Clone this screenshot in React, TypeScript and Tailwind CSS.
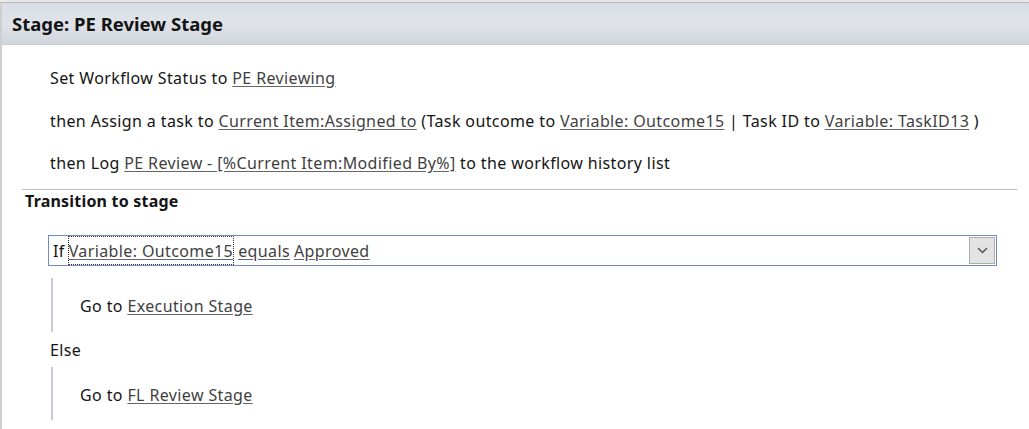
import React from "react";

const L = ({ children }: { children: React.ReactNode }) => (
  <span className="text-[#3f3f3f] underline decoration-[#666] underline-offset-2">{children}</span>
);

export default function App() {
  return (
    <div
      className="w-[1029px] h-[429px] bg-white overflow-hidden text-[16px] tracking-[0.38px] leading-[20px] text-[#141414]"
      style={{ fontFamily: '"Noto Sans", "Open Sans", sans-serif' }}
    >
      <div className="h-[2px] bg-[#e8e8e8]" />
      <div className="h-[427px] border-t border-[#b8b8b8] border-l-2 border-l-[#cfcfcf] flex flex-col">
        <div className="h-[42px] shrink-0 flex items-center pl-[10px] pt-[1px] bg-gradient-to-b from-[#d9dde5] via-[#e0e4ea] to-[#d1d5dc] border-b border-[#c9cdd3] font-bold text-[18.5px] tracking-normal">
          Stage: PE Review Stage
        </div>
        <div className="mt-[23px] pl-[48px] whitespace-nowrap">
          Set Workflow Status to <L>PE Reviewing</L>
        </div>
        <div className="mt-[23px] pl-[48px] whitespace-nowrap">
          then Assign a task to <L>Current Item:Assigned to</L> (Task outcome to <L>Variable: Outcome15</L> | Task ID to{" "}
          <L>Variable: TaskID13</L> )
        </div>
        <div className="mt-[22px] pl-[48px] whitespace-nowrap">
          then Log <L>PE Review - [%Current Item:Modified By%]</L> to the workflow history list
        </div>
        <div className="mt-[16px] ml-[20px] w-[995px] h-[1px] bg-[#bdbdbd]" />
        <div className="mt-[1px] pl-[23px] font-bold tracking-[0.2px]">Transition to stage</div>
        <div className="mt-[24px] ml-[46px] w-[949px] h-[31px] border border-[#6f8cc4] flex items-stretch">
          <div className="flex-1 flex items-center pl-[4px] whitespace-nowrap">
            <span>If</span>
            <span className="ml-[3px] self-stretch flex items-center outline-1 outline-dotted outline-[#333] -outline-offset-1 px-[1px]">
              <L>Variable: Outcome15</L>
            </span>
            <span className="ml-[4px]">
              <L>equals</L>
            </span>
            <span className="ml-[4px]">
              <L>Approved</L>
            </span>
          </div>
          <div className="mt-[1px] mb-[1px] mr-[1px] w-[26px] bg-[#e3e3e3] border border-[#adadad] flex items-center justify-center">
            <svg width="11" height="7" viewBox="0 0 11 7">
              <path d="M1 1 L5.5 5.5 L10 1" fill="none" stroke="#555" strokeWidth="1.5" />
            </svg>
          </div>
        </div>
        <div className="mt-[12px] ml-[49px] h-[54px] border-l-2 border-[#c9c9dd] pt-[18px] pl-[27px] whitespace-nowrap">
          Go to <L>Execution Stage</L>
        </div>
        <div className="mt-[8px] pl-[48px]">Else</div>
        <div className="mt-[7px] ml-[49px] h-[53px] border-l-2 border-[#c9c9dd] pt-[18px] pl-[27px] whitespace-nowrap">
          Go to <L>FL Review Stage</L>
        </div>
      </div>
    </div>
  );
}
